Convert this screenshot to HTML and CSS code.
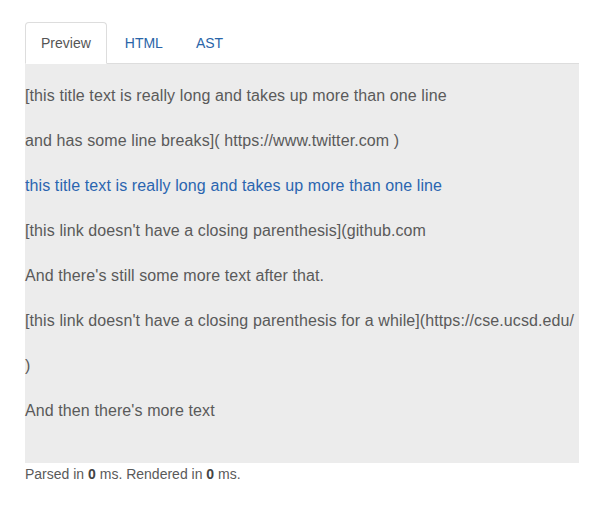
FILE: index.html
```html
<!DOCTYPE html>
<html>
<head>
<meta charset="utf-8">
<link rel="stylesheet" href="styles.css">
</head>
<body>
<div class="wrap">
  <ul class="tabs">
    <li class="tab active">Preview</li>
    <li class="tab">HTML</li>
    <li class="tab">AST</li>
  </ul>
  <div class="panel">
    <p>[this title text is really long and takes up more than one line</p>
    <p>and has some line breaks]( https://www.twitter.com )</p>
    <p><a href="#">this title text is really long and takes up more than one line</a></p>
    <p>[this link doesn't have a closing parenthesis](github.com</p>
    <p>And there's still some more text after that.</p>
    <p>[this link doesn't have a closing parenthesis for a while](https://cse.ucsd.edu/</p>
    <p>)</p>
    <p>And then there's more text</p>
  </div>
  <div class="footer">Parsed in <b>0</b> ms. Rendered in <b>0</b> ms.</div>
</div>
</body>
</html>
```
FILE: styles.css
```css
html, body {
  margin: 0;
  padding: 0;
  background: #fff;
}
body {
  font-family: "Liberation Sans", Arial, sans-serif;
  color: #555;
}
.wrap {
  width: 554px;
  margin: 22px 0 0 25px;
}
.tabs {
  list-style: none;
  margin: 0;
  padding: 0;
  display: flex;
  border-bottom: 1px solid #ddd;
}
.tab {
  font-size: 14px;
  line-height: 20px;
  padding: 10px 17px 10px 17px;
  margin-bottom: -1px;
  border: 1px solid transparent;
  border-radius: 4px 4px 0 0;
  color: #2a65a8;
}
.tab.active {
  color: #555;
  background: #fff;
  border-color: #ddd #ddd transparent #ddd;
  padding: 10px 15px;
}
.tab:last-child {
  padding-left: 14px;
}
.panel {
  background: #ececec;
  padding: 21px 0 18px 0;
}
.panel p {
  margin: 0 0 23px 0;
  font-size: 16px;
  line-height: 22px;
  letter-spacing: 0.1px;
  color: #5a5a5a;
}
.panel a {
  color: #2a65b0;
  text-decoration: none;
}
.footer {
  font-size: 14px;
  line-height: 20px;
  color: #5a5a5a;
  padding-top: 1px;
}
.footer b {
  color: #444;
}
```
